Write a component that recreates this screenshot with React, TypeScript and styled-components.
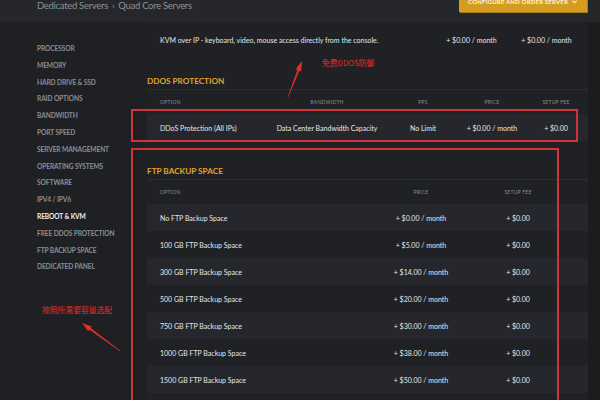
import React from 'react';
import styled, { createGlobalStyle } from 'styled-components';

const GlobalStyle = createGlobalStyle`
  html, body {
    margin: 0;
    padding: 0;
    background: #1b1d21;
  }
  body {
    font-family: Lato, "Noto Sans", sans-serif;
    -webkit-font-smoothing: antialiased;
  }
`;

const Page = styled.div`
  position: relative;
  width: 600px;
  height: 400px;
  overflow: hidden;
  background: #1b1d21;
  color: #e4e5e7;
`;

const TopBar = styled.header`
  display: flex;
  justify-content: space-between;
  align-items: flex-start;
  height: 22px;
  padding: 0 13px 0 37px;
  background: #25272b;
`;

const Breadcrumb = styled.div`
  font-size: 9.5px;
  line-height: 12px;
  letter-spacing: -0.3px;
  color: #8e9197;

  span {
    margin: 0 4px;
  }
`;

const OrderButton = styled.button`
  display: flex;
  align-items: center;
  gap: 3px;
  height: 21px;
  margin-top: -9px;
  padding: 0 9px;
  border: 0;
  background: #d49d1f;
  box-shadow: 1px 1px 0 #a67a18;
  color: #fff4d8;
  font-family: inherit;
  font-size: 6px;
  font-weight: 700;
  letter-spacing: 0.2px;
  text-transform: uppercase;
`;

const Body = styled.div`
  display: grid;
  grid-template-columns: 147px 441px 1fr;
  height: 378px;
`;

const Sidebar = styled.nav`
  display: flex;
  flex-direction: column;
  padding: 18px 0 0 37px;
  background: #1e2024;
`;

const SideItem = styled.div<{ $active?: boolean }>`
  font-size: 6.6px;
  font-weight: 700;
  line-height: 16.8px;
  letter-spacing: -0.1px;
  text-transform: uppercase;
  color: ${({ $active }) => ($active ? '#f1f1f1' : '#8b8e94')};
`;

const Main = styled.main`
  display: flex;
  flex-direction: column;
  padding-top: 4px;
  background: #1f2125;
`;

const RightEdge = styled.div`
  background: #1b1c20;
`;

const Section = styled.section<{ $gap: number }>`
  margin-top: ${({ $gap }) => $gap}px;
`;

const SectionTitle = styled.h3`
  margin: 0;
  height: 16px;
  line-height: 16px;
  font-size: 8.2px;
  font-weight: 700;
  letter-spacing: 0;
  color: #e2a22c;
  border-bottom: 1px solid #2b2d32;
`;

const HeadRow = styled.div<{ $cols: string }>`
  display: grid;
  grid-template-columns: ${({ $cols }) => $cols};
  align-items: center;
  height: 24px;
  padding-left: 13px;
  font-size: 5px;
  letter-spacing: 0.25px;
  text-transform: uppercase;
  color: #8c8f95;
`;

const Row = styled.div<{ $cols: string; $shade?: boolean }>`
  display: grid;
  grid-template-columns: ${({ $cols }) => $cols};
  align-items: center;
  height: 27px;
  padding-left: 13px;
  font-size: 7px;
  white-space: nowrap;
  color: #e6e7e9;
  background: ${({ $shade }) => ($shade ? '#25272c' : 'transparent')};
`;

const Cell = styled.div<{ $center?: boolean }>`
  justify-self: ${({ $center }) => ($center ? 'center' : 'start')};
`;

const RedBox = styled.div<{ $x: number; $y: number; $w: number; $h: number }>`
  position: absolute;
  left: ${({ $x }) => $x}px;
  top: ${({ $y }) => $y}px;
  width: ${({ $w }) => $w}px;
  height: ${({ $h }) => $h}px;
  border: 2px solid #d2333a;
  box-sizing: border-box;
  pointer-events: none;
`;

const Note = styled.div<{ $x: number; $y: number }>`
  position: absolute;
  left: ${({ $x }) => $x}px;
  top: ${({ $y }) => $y}px;
  font-family: "Noto Sans CJK SC", "Noto Sans", sans-serif;
  font-size: 7.8px;
  line-height: 10px;
  color: #e0302e;
`;

const Overlay = styled.svg`
  position: absolute;
  inset: 0;
  pointer-events: none;
`;

const sideItems = [
  'Processor',
  'Memory',
  'Hard Drive & SSD',
  'RAID Options',
  'Bandwidth',
  'Port Speed',
  'Server Management',
  'Operating Systems',
  'Software',
  'IPv4 / IPv6',
  'Reboot & KVM',
  'Free DDoS Protection',
  'FTP Backup Space',
  'Dedicated Panel',
];

const ftpRows = [
  ['No FTP Backup Space', '+ $0.00 / month'],
  ['100 GB FTP Backup Space', '+ $5.00 / month'],
  ['300 GB FTP Backup Space', '+ $14.00 / month'],
  ['500 GB FTP Backup Space', '+ $20.00 / month'],
  ['750 GB FTP Backup Space', '+ $30.00 / month'],
  ['1000 GB FTP Backup Space', '+ $38.00 / month'],
  ['1500 GB FTP Backup Space', '+ $50.00 / month'],
];

const KVM_COLS = '274px 75px 75px';
const DDOS_COLS = '117px 100px 92px 46px 82px';
const FTP_COLS = '211px 100px 94px';

// tapered annotation arrow, from tail to tip
const arrowPoints = (x1: number, y1: number, x2: number, y2: number) => {
  const dx = x2 - x1;
  const dy = y2 - y1;
  const len = Math.hypot(dx, dy);
  const ux = dx / len;
  const uy = dy / len;
  const nx = -uy;
  const ny = ux;
  const bx = x2 - ux * 10;
  const by = y2 - uy * 10;
  const pts = [
    [x1 + nx * 0.3, y1 + ny * 0.3],
    [bx + nx * 1, by + ny * 1],
    [bx + nx * 3, by + ny * 3],
    [x2, y2],
    [bx - nx * 3, by - ny * 3],
    [bx - nx * 1, by - ny * 1],
    [x1 - nx * 0.3, y1 - ny * 0.3],
  ];
  return pts.map((p) => p.map((v) => v.toFixed(1)).join(',')).join(' ');
};

const App = () => {
  return (
    <Page>
      <GlobalStyle />
      <TopBar>
        <Breadcrumb>
          Dedicated Servers<span>›</span>Quad Core Servers
        </Breadcrumb>
        <OrderButton>
          Configure and Order Server
          <svg width="7" height="7" viewBox="0 0 8 8" fill="none" stroke="currentColor" strokeWidth="1.2">
            <path d="M1.5 3l2.5 2.5L6.5 3" />
          </svg>
        </OrderButton>
      </TopBar>
      <Body>
        <Sidebar>
          {sideItems.map((item) => (
            <SideItem key={item} $active={item === 'Reboot & KVM'}>
              {item}
            </SideItem>
          ))}
        </Sidebar>
        <Main>
          <Row $cols={KVM_COLS}>
            <Cell>KVM over IP - keyboard, video, mouse access directly from the console.</Cell>
            <Cell $center>+ $0.00 / month</Cell>
            <Cell $center>+ $0.00 / month</Cell>
          </Row>

          <Section $gap={20}>
            <SectionTitle>DDOS PROTECTION</SectionTitle>
            <HeadRow $cols={DDOS_COLS}>
              <Cell>Option</Cell>
              <Cell $center>Bandwidth</Cell>
              <Cell $center>PPS</Cell>
              <Cell $center>Price</Cell>
              <Cell $center>Setup Fee</Cell>
            </HeadRow>
            <Row $cols={DDOS_COLS} $shade>
              <Cell>DDoS Protection (All IPs)</Cell>
              <Cell $center>Data Center Bandwidth Capacity</Cell>
              <Cell $center>No Limit</Cell>
              <Cell $center>+ $0.00 / month</Cell>
              <Cell $center>+ $0.00</Cell>
            </Row>
          </Section>

          <Section $gap={22}>
            <SectionTitle>FTP BACKUP SPACE</SectionTitle>
            <HeadRow $cols={FTP_COLS}>
              <Cell>Option</Cell>
              <Cell $center>Price</Cell>
              <Cell $center>Setup Fee</Cell>
            </HeadRow>
            {ftpRows.map(([name, price], i) => (
              <Row key={name} $cols={FTP_COLS} $shade={i % 2 === 0}>
                <Cell>{name}</Cell>
                <Cell $center>{price}</Cell>
                <Cell $center>+ $0.00</Cell>
              </Row>
            ))}
          </Section>
        </Main>
        <RightEdge />
      </Body>

      <RedBox $x={131} $y={109} $w={447} $h={33} />
      <RedBox $x={131} $y={148} $w={428} $h={270} />
      <Note $x={322} $y={58}>免费DDOS防御</Note>
      <Note $x={42} $y={305}>按照所需要容量选配</Note>
      <Overlay width="600" height="400">
        <polygon points={arrowPoints(288, 97, 302, 61)} fill="#e0302e" />
        <polygon points={arrowPoints(120, 351, 82, 323)} fill="#e0302e" />
      </Overlay>
    </Page>
  );
};

export default App;
